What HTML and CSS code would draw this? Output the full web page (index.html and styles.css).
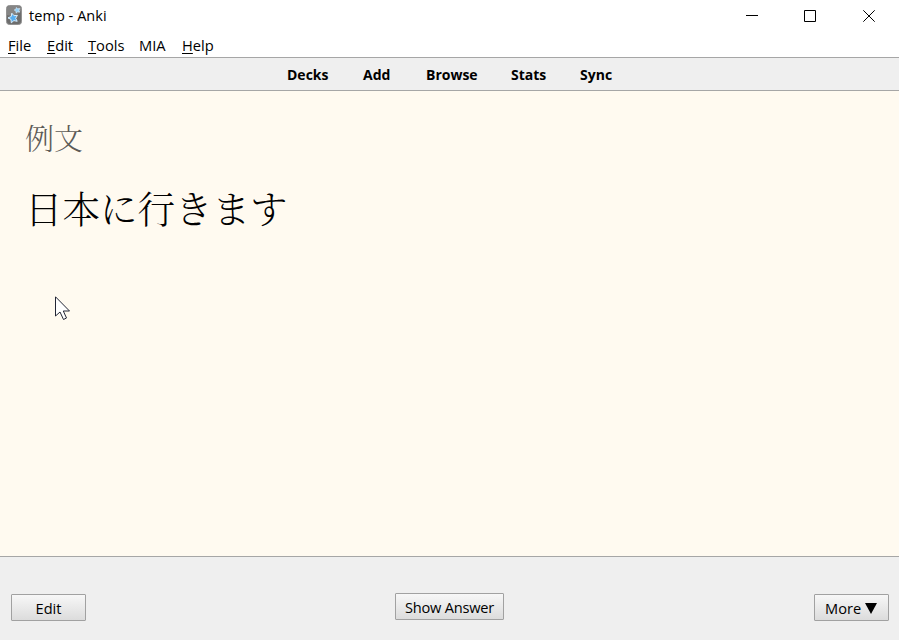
FILE: index.html
```html
<!DOCTYPE html>
<html lang="en">
<head>
<meta charset="utf-8">
<title>temp - Anki</title>
<link rel="stylesheet" href="styles.css">
</head>
<body>
<header class="titlebar">
  <svg class="logo" width="16" height="20" viewBox="0 0 16 20">
    <rect x=".5" y=".5" width="15" height="19" rx="3" fill="#6d6d6d" stroke="#929292"/>
    <path d="M1 10Q9 12 15 6V3Q15 1 13 1H3Q1 1 1 3Z" fill="#858585"/>
    <path d="M5.8 8.2L8 10.7L11.4 10.3L9.7 13.3L11.2 16.3L7.9 15.6L5.3 17.8L5 14.4L2 12.9L5.2 11.5Z" fill="#58aef0" stroke="#d9efff" stroke-width="1"/>
    <path d="M10.3 2.5L11.7 3.8L13.8 3.5L12.9 5.3L13.7 7.2L11.6 6.8L10.2 8L9.9 6L8.2 5L10 4.2Z" fill="#8fd0fa" stroke="#d9efff" stroke-width=".6"/>
  </svg>
  <span class="title">temp - Anki</span>
  <svg class="controls" width="129" height="12" viewBox="0 0 129 12" fill="none" stroke="#000" stroke-width="1">
    <path d="M0 5.5H12M58.500 .5H69.500V11.500H58.500Z"/>
    <path d="M117.300 .3L128.700 11.700M128.700 .3L117.300 11.700"/>
  </svg>
</header>
<nav class="menubar">
  <span class="file"><u>F</u>ile</span><span class="edit"><u>E</u>dit</span><span class="tools"><u>T</u>ools</span><span class="mia">MIA</span><span><u>H</u>elp</span>
</nav>
<nav class="toolbar">
  <span class="decks">Decks</span><span class="add">Add</span><span class="browse">Browse</span><span class="stats">Stats</span><span class="sync">Sync</span>
</nav>
<main class="card" lang="ja">
  <div class="label">例文</div>
  <div class="sentence">日本に行きます</div>
  <svg class="cursor" width="17" height="26" viewBox="0 0 17 26">
    <path d="M.5 .8V20L5 16L8.500 23.500L11.500 22L8.300 15H14.500Z" fill="#fff" stroke="#222535"/>
  </svg>
</main>
<footer class="bottom">
  <button class="side">Edit</button>
  <button class="answer">Show Answer</button>
  <button class="side more">More <svg width="12" height="11" viewBox="0 0 12 11"><path d="M0 0H12L6 11Z"/></svg></button>
</footer>
</body>
</html>
```
FILE: styles.css
```css
* { box-sizing: border-box; }
body {
  margin: 0;
  width: 899px;
  height: 640px;
  overflow: hidden;
  display: flex;
  flex-direction: column;
  background: #fff;
  color: #000;
  font: 14.7px/20px "Open Sans", "Noto Sans", sans-serif;
}
.titlebar {
  height: 34px;
  padding: 0 24px 2px 6px;
  display: flex;
  align-items: center;
}
.logo { margin: -2px 7px 0 0; }
.title { font-size: 14.5px; letter-spacing: .05px; }
.controls { margin-left: auto; }
.menubar {
  height: 23px;
  padding: 1px 8px 0;
  display: flex;
}
.menubar u { text-underline-offset: 2px; text-decoration-thickness: 1px; text-decoration-skip-ink: none; }
.file { width: 39px; }
.edit { width: 41px; }
.tools { width: 51px; }
.mia { width: 43px; }
.toolbar {
  height: 34px;
  padding: 2px 0 0 287px;
  display: flex;
  align-items: center;
  background: #efefef;
  border-top: 1px solid #a6a6a6;
  border-bottom: 1px solid #a6a6a6;
  font-size: 14px;
  font-weight: 700;
}
.decks { width: 76px; }
.add { width: 63px; }
.browse { width: 85px; }
.stats { width: 69px; }
.card {
  position: relative;
  flex: 1;
  padding: 26px 25px;
  background: #fffaf0;
  font-family: "Noto Serif CJK JP", "Noto Sans CJK JP", serif;
  font-weight: 300;
}
.label { font-size: 29px; line-height: 42px; color: #5d5b57; }
.sentence { margin-top: 20px; font-size: 37.5px; line-height: 56px; }
.cursor { position: absolute; left: 55px; top: 205px; }
.bottom {
  height: 84px;
  padding: 36px 10px 0 11px;
  display: flex;
  justify-content: space-between;
  background: #efefef;
  border-top: 1px solid #a6a6a6;
}
button {
  height: 27px;
  padding: 1px 0 0;
  border: 1px solid #a1a1a1;
  border-radius: 1px;
  background: linear-gradient(#f7f7f7, #dcdcdc);
  color: #000;
  font: 14.6px/20px "Open Sans", "Noto Sans", sans-serif;
}
.side { width: 75px; margin-top: 1px; }
.more { padding-right: 1px; }
.answer { width: 109px; margin-right: 1px; letter-spacing: -.2px; }
```
